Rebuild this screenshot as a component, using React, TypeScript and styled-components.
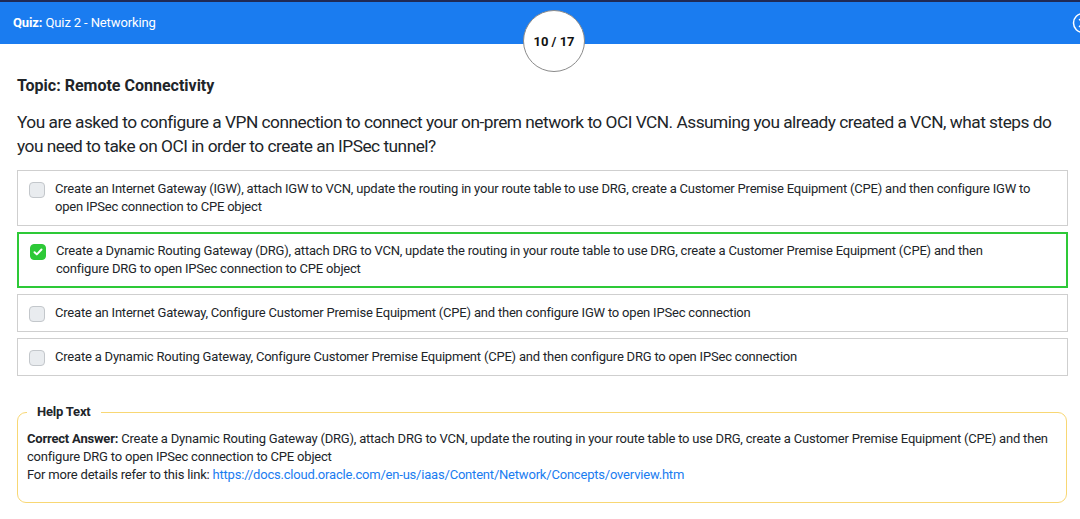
import React from "react";
import styled, { createGlobalStyle } from "styled-components";

const GlobalStyle = createGlobalStyle`
  html, body { margin: 0; padding: 0; background: #fff; }
  body { font-family: Roboto, "Liberation Sans", Arial, sans-serif; color: #212529; overflow: hidden; }
  * { box-sizing: border-box; }
`;

const Page = styled.div`
  width: 1080px;
  position: relative;
`;

const Header = styled.header`
  height: 44px;
  background: #1a7cf0;
  border-top: 2px solid #1f2a55;
  display: flex;
  align-items: center;
  justify-content: space-between;
  padding: 0 0 0 13px;
  color: #fff;
  font-size: 13px;
  letter-spacing: -0.12px;
  position: relative;
  overflow: hidden;
`;

const Title = styled.div`
  margin-top: -1px;
  b { font-weight: 700; }
`;

const CloseBtn = styled.div`
  width: 22px;
  height: 22px;
  margin-right: -14px;
  margin-top: -1px;
  display: flex;
`;

const Counter = styled.div`
  position: absolute;
  left: 523px;
  top: 10px;
  width: 62px;
  height: 62px;
  border-radius: 50%;
  background: #fff;
  border: 1px solid #8a8a8a;
  display: flex;
  align-items: center;
  justify-content: center;
  font-size: 13px;
  font-weight: 700;
  color: #111;
  z-index: 2;
`;

const Main = styled.main`
  padding: 32px 12px 0 17px;
`;

const Topic = styled.h2`
  margin: 0;
  font-size: 16px;
  font-weight: 700;
  line-height: 19px;
  color: #212529;
`;

const Question = styled.p`
  margin: 15px 0 12px;
  padding-right: 8px;
  font-size: 17.3px;
  letter-spacing: -0.5px;
  line-height: 24px;
  color: #212529;
`;

const Options = styled.div`
  display: flex;
  flex-direction: column;
  gap: 6px;
`;

const Option = styled.label<{ $selected?: boolean }>`
  display: flex;
  align-items: flex-start;
  gap: 10px;
  border: ${(p) => (p.$selected ? "2px solid #2dc937" : "1px solid #cfcfcf")};
  padding: ${(p) => (p.$selected ? "8px 28px 8px 11px" : "9px 29px 9px 11px")};
  font-size: 13px;
  letter-spacing: -0.2px;
  line-height: 18px;
  color: #212529;
`;

const Check = styled.span<{ $checked?: boolean }>`
  flex: 0 0 16px;
  width: 16px;
  height: 16px;
  margin-top: 2px;
  border-radius: 4px;
  background: ${(p) => (p.$checked ? "#2dc937" : "#e9ecef")};
  border: 1px solid ${(p) => (p.$checked ? "#2dc937" : "#c3c7cb")};
  display: flex;
  align-items: center;
  justify-content: center;
`;

const Help = styled.fieldset`
  margin: 27px 1px 0 0;
  border: 1px solid #f8d774;
  border-radius: 9px;
  padding: 9px 9px 18px;
  font-size: 13px;
  letter-spacing: -0.2px;
  line-height: 18px;
  color: #212529;
`;

const Legend = styled.legend`
  padding: 0 10px;
  font-weight: 700;
  font-size: 13px;
  line-height: 18px;
`;

const Link = styled.a`
  color: #1a7cf0;
  text-decoration: none;
`;

const options = [
  "Create an Internet Gateway (IGW), attach IGW to VCN, update the routing in your route table to use DRG, create a Customer Premise Equipment (CPE) and then configure IGW to open IPSec connection to CPE object",
  "Create a Dynamic Routing Gateway (DRG), attach DRG to VCN, update the routing in your route table to use DRG, create a Customer Premise Equipment (CPE) and then configure DRG to open IPSec connection to CPE object",
  "Create an Internet Gateway, Configure Customer Premise Equipment (CPE) and then configure IGW to open IPSec connection",
  "Create a Dynamic Routing Gateway, Configure Customer Premise Equipment (CPE) and then configure DRG to open IPSec connection",
];

export default function App() {
  return (
    <Page>
      <GlobalStyle />
      <Header>
        <Title>
          <b>Quiz:</b> Quiz 2 - Networking
        </Title>
        <CloseBtn>
          <svg width="22" height="22" viewBox="0 0 22 22" fill="none" stroke="#fff" strokeWidth="1.5">
            <circle cx="11" cy="11" r="9.5" />
            <path d="M7.5 7.5l7 7M14.5 7.5l-7 7" strokeLinecap="round" />
          </svg>
        </CloseBtn>
      </Header>
      <Counter>10 / 17</Counter>
      <Main>
        <Topic>Topic: Remote Connectivity</Topic>
        <Question>
          You are asked to configure a VPN connection to connect your on-prem network to OCI VCN. Assuming you already created a VCN, what steps do you need to take on OCI in order to create an IPSec tunnel?
        </Question>
        <Options>
          {options.map((o, i) => (
            <Option key={i} $selected={i === 1}>
              <Check $checked={i === 1}>
                {i === 1 && (
                  <svg width="10" height="8" viewBox="0 0 10 8" fill="none" stroke="#fff" strokeWidth="2" strokeLinecap="round" strokeLinejoin="round">
                    <path d="M1.5 4.2l2.3 2.2L8.5 1.5" />
                  </svg>
                )}
              </Check>
              <span>{o}</span>
            </Option>
          ))}
        </Options>
        <Help>
          <Legend>Help Text</Legend>
          <b>Correct Answer:</b> Create a Dynamic Routing Gateway (DRG), attach DRG to VCN, update the routing in your route table to use DRG, create a Customer Premise Equipment (CPE) and then configure DRG to open IPSec connection to CPE object
          <br />
          For more details refer to this link:{" "}
          <Link href="#">https://docs.cloud.oracle.com/en-us/iaas/Content/Network/Concepts/overview.htm</Link>
        </Help>
      </Main>
    </Page>
  );
}
